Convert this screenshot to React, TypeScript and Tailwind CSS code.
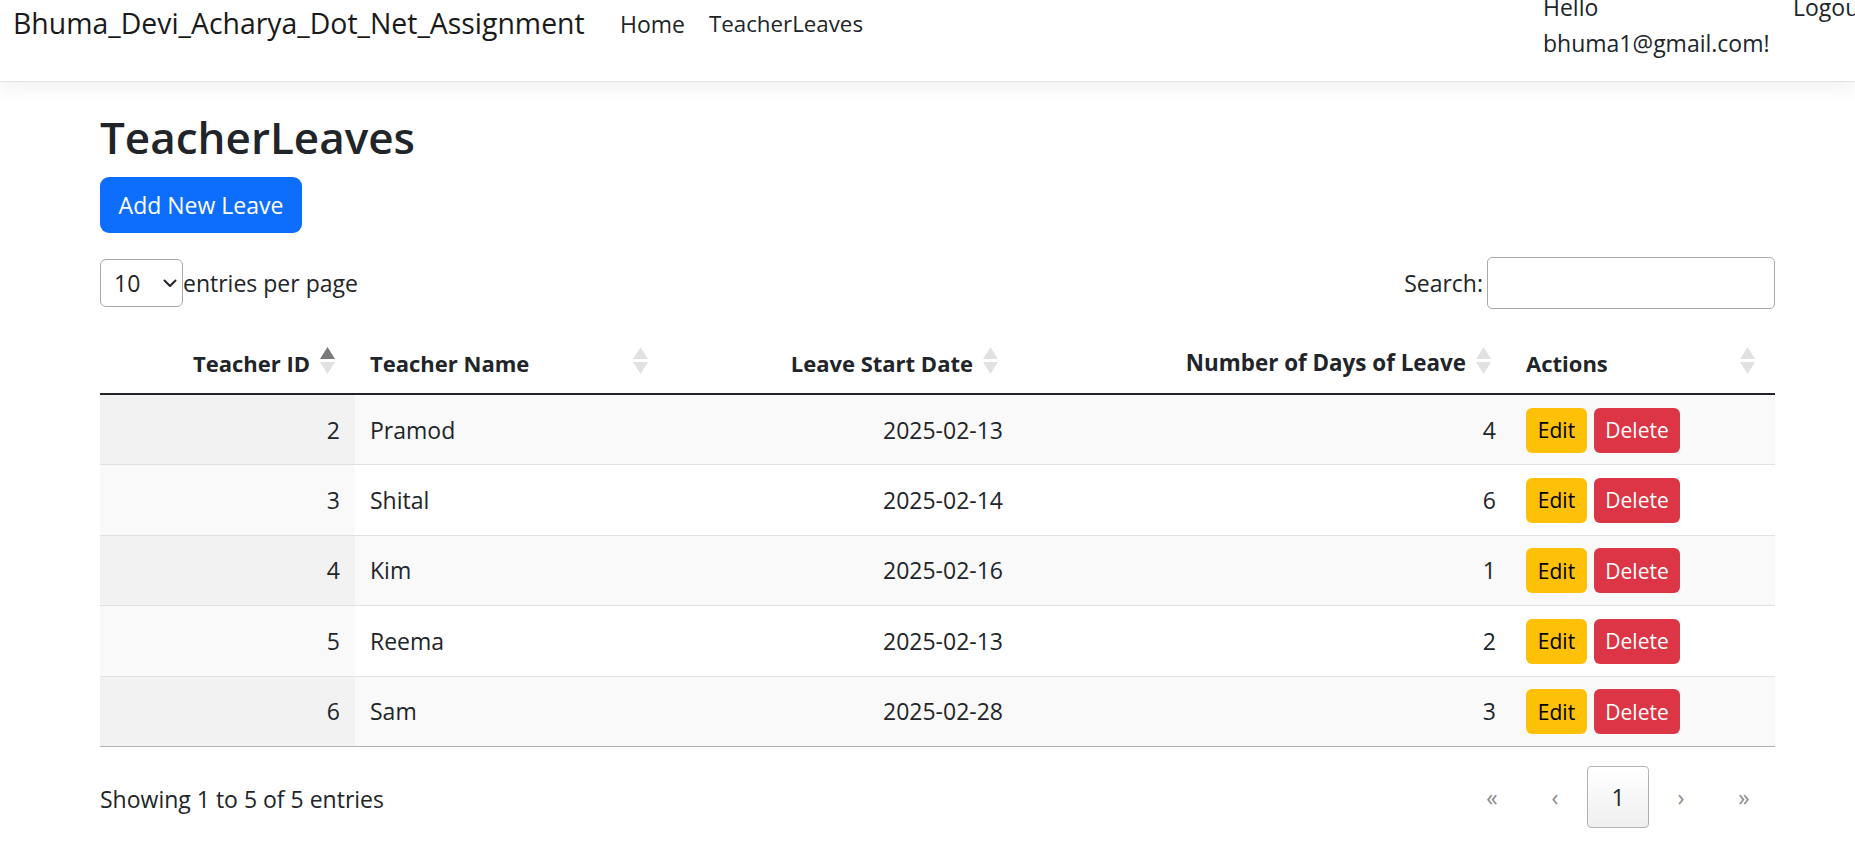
import React from "react";

type Row = { id: number; name: string; date: string; days: number };

const rows: Row[] = [
  { id: 2, name: "Pramod", date: "2025-02-13", days: 4 },
  { id: 3, name: "Shital", date: "2025-02-14", days: 6 },
  { id: 4, name: "Kim", date: "2025-02-16", days: 1 },
  { id: 5, name: "Reema", date: "2025-02-13", days: 2 },
  { id: 6, name: "Sam", date: "2025-02-28", days: 3 },
];

function SortIcon({ active = false }: { active?: boolean }) {
  return (
    <span className="absolute right-[20px] top-[20px] block">
      <svg width="15" height="27" viewBox="0 0 15 27">
        <path d="M7.5 0 L15 12 L0 12 Z" fill={active ? "#7a7a7a" : "#e1e1e1"} />
        <path d="M0 15 L15 15 L7.5 27 Z" fill="#e1e1e1" />
      </svg>
    </span>
  );
}

export default function App() {
  return (
    <div className="min-h-screen bg-white text-[#212529] font-['Open_Sans','Noto_Sans',sans-serif]">
      <header className="relative flex h-[82px] items-start overflow-hidden border-b border-[#dee2e6] bg-white shadow-[0_6px_18px_rgba(0,0,0,0.06)]">
        <div className="ml-[13px] mt-[1px] w-[570px] shrink-0 whitespace-nowrap text-[28.4px] leading-[45px] text-[#1a1a1a]">
          Bhuma_Devi_Acharya_Dot_Net_Assignment
        </div>
        <nav className="ml-[37px] mt-[6px] flex text-[23px] leading-[36px] text-[#212529]">
          <span className="w-[64px] whitespace-nowrap">Home</span>
          <span className="ml-[25px] whitespace-nowrap text-[22.3px]">TeacherLeaves</span>
        </nav>
        <div className="ml-auto -mt-[11px] w-[250px] shrink-0 text-[23px] leading-[36px]">
          Hello bhuma1@gmail.com!
        </div>
        <div className="-mt-[11px] w-[62px] shrink-0 whitespace-nowrap text-[23px] leading-[36px]">
          Logout
        </div>
      </header>

      <main className="pl-[100px] pr-[80px]">
        <h2 className="mt-[26px] mb-[11px] text-[44px] font-semibold leading-[58px]">TeacherLeaves</h2>
        <button className="flex h-[56px] w-[202px] items-center justify-center rounded-[9px] bg-[#0d6efd] text-[23px] text-white">
          Add New Leave
        </button>

        <div className="mt-[24px] flex h-[52px] items-center justify-between text-[23px] leading-[36px]">
          <div className="flex items-center">
            <div className="relative h-[48px] w-[83px]">
              <select
                defaultValue="10"
                className="h-full w-full appearance-none rounded-[6px] border border-[#aaaaaa] bg-white pl-[13px] text-[23px] text-[#212529] outline-none"
              >
                <option value="10">10</option>
                <option value="25">25</option>
              </select>
              <svg
                className="pointer-events-none absolute right-[6px] top-[20px]"
                width="14"
                height="9"
                viewBox="0 0 14 9"
              >
                <path d="M1.5 1.5 L7 7 L12.5 1.5" fill="none" stroke="#212529" strokeWidth="2" strokeLinecap="round" strokeLinejoin="round" />
              </svg>
            </div>
            <span className="whitespace-nowrap">entries per page</span>
          </div>
          <div className="flex items-center">
            <span>Search:</span>
            <input className="ml-[4px] h-[52px] w-[288px] rounded-[5px] border border-[#aaaaaa] bg-white outline-none" />
          </div>
        </div>

        <table className="mt-[18px] w-full table-fixed border-collapse text-[23px] leading-[36px]">
          <colgroup>
            <col className="w-[255px]" />
            <col className="w-[313px]" />
            <col className="w-[350px]" />
            <col className="w-[493px]" />
            <col />
          </colgroup>
          <thead>
            <tr className="border-b-2 border-[#212529]">
              <th className="relative pt-[18px] pb-[12px] pl-[15px] pr-[45px] text-right text-[22px] font-bold">
                Teacher ID
                <SortIcon active />
              </th>
              <th className="relative pt-[18px] pb-[12px] pl-[15px] pr-[45px] text-left text-[22px] font-bold">
                Teacher Name
                <SortIcon />
              </th>
              <th className="relative pt-[18px] pb-[12px] pl-[15px] pr-[45px] text-right text-[22px] font-bold">
                Leave Start Date
                <SortIcon />
              </th>
              <th className="relative whitespace-nowrap pt-[18px] pb-[12px] pl-[15px] pr-[45px] text-right text-[22.4px] font-bold">
                Number of Days of Leave
                <SortIcon />
              </th>
              <th className="relative pt-[18px] pb-[12px] pl-[15px] pr-[45px] text-left text-[22px] font-bold">
                Actions
                <SortIcon />
              </th>
            </tr>
          </thead>
          <tbody>
            {rows.map((r, i) => {
              const odd = i % 2 === 0;
              const last = i === rows.length - 1;
              return (
                <tr
                  key={r.id}
                  className={last ? "border-b border-[#b3b3b3]" : "border-b border-[#dee2e6]"}
                >
                  <td className={odd ? "h-[70.5px] bg-[#f2f2f2] px-[15px] text-right align-middle" : "h-[70.5px] bg-[#f9f9f9] px-[15px] text-right align-middle"}>
                    {r.id}
                  </td>
                  <td className={odd ? "bg-[#f9f9f9] px-[15px] text-left align-middle" : "bg-white px-[15px] text-left align-middle"}>
                    {r.name}
                  </td>
                  <td className={odd ? "bg-[#f9f9f9] px-[15px] text-right align-middle" : "bg-white px-[15px] text-right align-middle"}>
                    {r.date}
                  </td>
                  <td className={odd ? "bg-[#f9f9f9] px-[15px] text-right align-middle" : "bg-white px-[15px] text-right align-middle"}>
                    {r.days}
                  </td>
                  <td className={odd ? "bg-[#f9f9f9] px-[15px] align-middle" : "bg-white px-[15px] align-middle"}>
                    <div className="flex gap-[7px] pt-[1px]">
                      <button className="flex h-[45px] w-[61px] items-center justify-center rounded-[6px] bg-[#ffc107] text-[21px] text-black">
                        Edit
                      </button>
                      <button className="flex h-[45px] w-[86px] items-center justify-center rounded-[6px] bg-[#dc3545] text-[21px] text-white">
                        Delete
                      </button>
                    </div>
                  </td>
                </tr>
              );
            })}
          </tbody>
        </table>

        <div className="mt-[19px] flex h-[62px] items-center justify-between text-[23px] leading-[36px]">
          <div className="pt-[3px]">Showing 1 to 5 of 5 entries</div>
          <div className="flex gap-[1px] text-[#8a8a8a]">
            <span className="flex h-[62px] w-[62px] items-center justify-center">«</span>
            <span className="flex h-[62px] w-[62px] items-center justify-center">‹</span>
            <span className="flex h-[62px] w-[62px] items-center justify-center rounded-[4px] border border-[#b3b3b3] bg-gradient-to-b from-white to-[#efefef] text-[#212529]">
              1
            </span>
            <span className="flex h-[62px] w-[62px] items-center justify-center">›</span>
            <span className="flex h-[62px] w-[62px] items-center justify-center">»</span>
          </div>
        </div>
      </main>
    </div>
  );
}
